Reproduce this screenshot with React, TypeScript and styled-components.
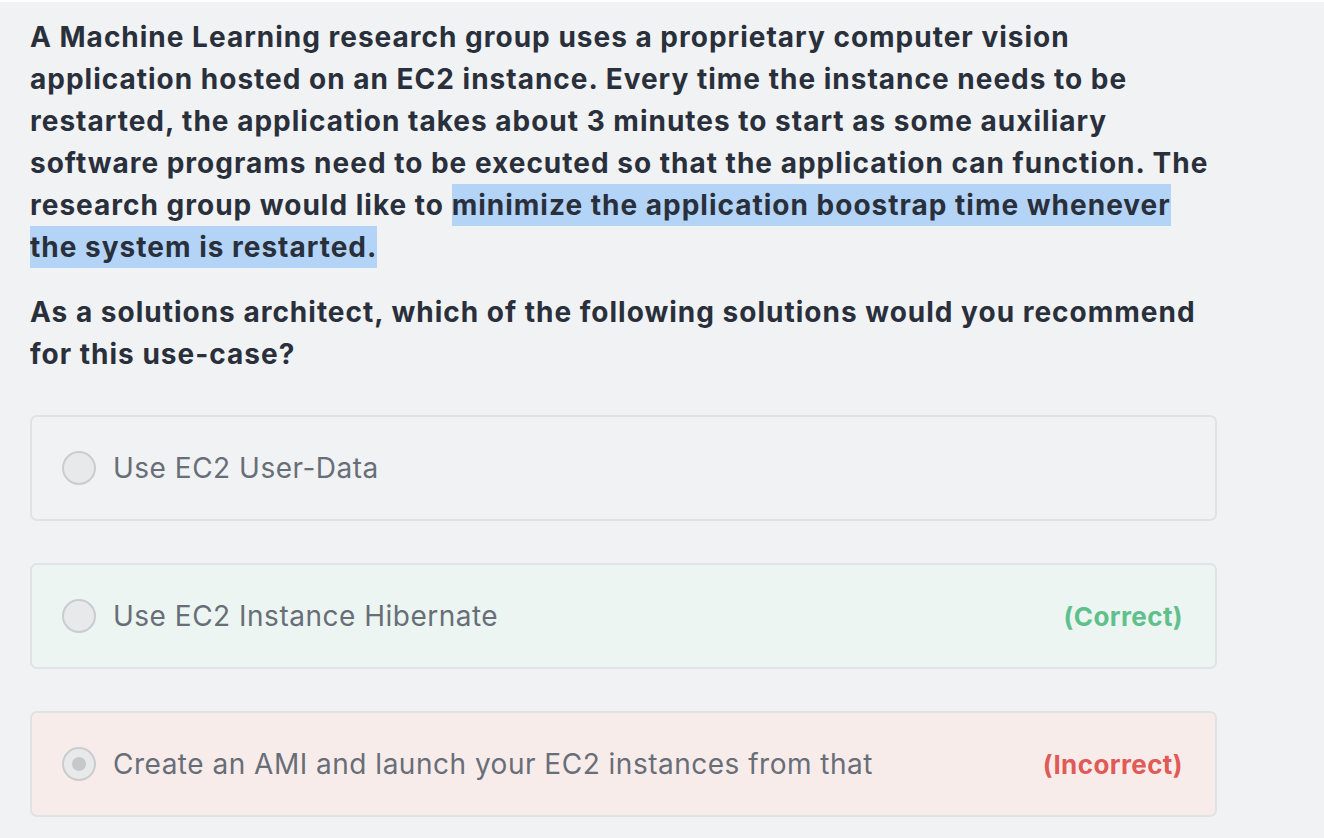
import React from "react";
import styled, { createGlobalStyle } from "styled-components";

const Global = createGlobalStyle`
  html, body { margin: 0; padding: 0; background: #ffffff; }
  body { font-family: Inter, "Open Sans", "Liberation Sans", sans-serif; }
`;

const Page = styled.main`
  margin-top: 2px;
  min-height: 836px;
  background: #f1f2f4;
  padding: 14px 0 0 30px;
  box-sizing: border-box;
`;

const Column = styled.div`
  width: 1190px;
  display: flex;
  flex-direction: column;
`;

const Prompt = styled.p`
  margin: 0;
  font-size: 28px;
  line-height: 42px;
  font-weight: 700;
  letter-spacing: 1px;
  color: #29303b;
`;

const Mark = styled.mark`
  background: #b4d4f7;
  color: inherit;
  padding: 4px 0;
  -webkit-box-decoration-break: clone;
  box-decoration-break: clone;
`;

const Question = styled(Prompt)`
  margin-top: 23px;
`;

const Options = styled.div`
  margin-top: 40px;
  display: flex;
  flex-direction: column;
  gap: 42px;
  width: 1187px;
`;

type Status = "none" | "correct" | "incorrect";

const Option = styled.div<{ $status: Status }>`
  height: 106px;
  box-sizing: border-box;
  border: 2px solid #e1e2e4;
  border-radius: 7px;
  background: ${(p) =>
    p.$status === "correct" ? "#ecf5f1" : p.$status === "incorrect" ? "#f8ecea" : "#f1f2f4"};
  display: flex;
  align-items: center;
  padding: 0 32px 0 30px;
`;

const Radio = styled.span<{ $checked: boolean }>`
  width: 34px;
  height: 34px;
  box-sizing: border-box;
  border-radius: 50%;
  border: 2px solid #cbccce;
  background: #e8e9eb;
  flex: none;
  display: flex;
  align-items: center;
  justify-content: center;
  &::after {
    content: "";
    display: ${(p) => (p.$checked ? "block" : "none")};
    width: 14px;
    height: 14px;
    border-radius: 50%;
    background: #c7c8ca;
  }
`;

const Label = styled.span`
  margin-left: 17px;
  flex: 1;
  font-size: 28px;
  letter-spacing: 0.5px;
  color: #686e78;
  font-weight: 400;
`;

const Verdict = styled.span<{ $status: Status }>`
  font-size: 26px;
  letter-spacing: 0.4px;
  font-weight: 700;
  color: ${(p) => (p.$status === "correct" ? "#60c08c" : "#e05a58")};
`;

const options: { text: string; status: Status; checked: boolean }[] = [
  { text: "Use EC2 User-Data", status: "none", checked: false },
  { text: "Use EC2 Instance Hibernate", status: "correct", checked: false },
  { text: "Create an AMI and launch your EC2 instances from that", status: "incorrect", checked: true },
];

export default function App() {
  return (
    <>
      <Global />
      <Page>
        <Column>
          <Prompt>
            A Machine Learning research group uses a proprietary computer vision application hosted on an EC2
            instance. Every time the instance needs to be restarted, the application takes about 3 minutes to
            start as some auxiliary software programs need to be executed so that the application can function.
            The research group would like to{" "}
            <Mark>minimize the application boostrap time whenever the system is restarted.</Mark>
          </Prompt>
          <Question>
            As a solutions architect, which of the following solutions would you recommend for this use-case?
          </Question>
          <Options>
            {options.map((o) => (
              <Option key={o.text} $status={o.status}>
                <Radio $checked={o.checked} />
                <Label>{o.text}</Label>
                {o.status !== "none" && (
                  <Verdict $status={o.status}>
                    {o.status === "correct" ? "(Correct)" : "(Incorrect)"}
                  </Verdict>
                )}
              </Option>
            ))}
          </Options>
        </Column>
      </Page>
    </>
  );
}
